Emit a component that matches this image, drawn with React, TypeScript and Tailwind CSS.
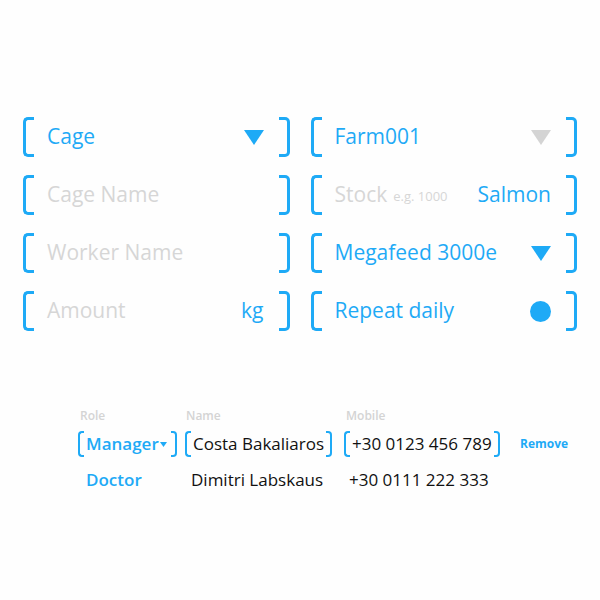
const BLUE = "text-[#1eaaf6]"

function Field({ children }: { children: React.ReactNode }) {
  return (
    <div className="flex h-[40px] items-stretch">
      <div className="w-[11px] rounded-l-[5px] border-[3px] border-r-0 border-[#1eaaf6]" />
      <div className="flex flex-1 items-center pl-[13px] pr-[15px] text-[21px] font-medium">{children}</div>
      <div className="w-[11px] rounded-r-[5px] border-[3px] border-l-0 border-[#1eaaf6]" />
    </div>
  )
}

function SmallField({ children, w }: { children: React.ReactNode; w: string }) {
  return (
    <div className={`flex h-[26px] items-stretch whitespace-nowrap ${w}`}>
      <div className="w-[6px] rounded-l-[4px] border-2 border-r-0 border-[#1eaaf6]" />
      <div className="flex flex-1 items-center px-[2px]">{children}</div>
      <div className="w-[6px] rounded-r-[4px] border-2 border-l-0 border-[#1eaaf6]" />
    </div>
  )
}

function Triangle({ color }: { color: string }) {
  return (
    <svg width="20" height="15" viewBox="0 0 20 15" className="ml-auto">
      <polygon points="0,0 20,0 10,15" fill={color} />
    </svg>
  )
}

export default function App() {
  return (
    <div className="min-h-[600px] w-[600px] bg-[#fefefe] font-['Open_Sans',sans-serif]">
      <div className="grid grid-cols-2 gap-x-[21px] gap-y-[18px] px-[23px] pt-[117px]">
        <Field>
          <span className={BLUE}>Cage</span>
          <Triangle color="#1eaaf6" />
        </Field>
        <Field>
          <span className={BLUE}>Farm001</span>
          <Triangle color="#d4d4d4" />
        </Field>
        <Field>
          <span className="text-[#d6d6d6]">Cage Name</span>
        </Field>
        <Field>
          <span className="text-[#d6d6d6]">Stock</span>
          <span className="ml-[6px] mt-[4px] text-[13px] text-[#d6d6d6]">e.g. 1000</span>
          <span className={`ml-auto ${BLUE}`}>Salmon</span>
        </Field>
        <Field>
          <span className="text-[#d6d6d6]">Worker Name</span>
        </Field>
        <Field>
          <span className={BLUE}>Megafeed 3000e</span>
          <Triangle color="#1eaaf6" />
        </Field>
        <Field>
          <span className="text-[#d6d6d6]">Amount</span>
          <span className={`ml-auto ${BLUE}`}>kg</span>
        </Field>
        <Field>
          <span className={BLUE}>Repeat daily</span>
          <span className="ml-auto h-[21px] w-[21px] rounded-full bg-[#1eaaf6]" />
        </Field>
      </div>

      <div className="ml-[78px] mt-[76px] grid grid-cols-[107px_159px_176px_auto] items-center whitespace-nowrap text-[17px] font-medium">
        <span className="mb-[6px] pl-[2px] text-[12px] font-semibold text-[#d4d4d4]">Role</span>
        <span className="mb-[6px] pl-[1px] text-[12px] font-semibold text-[#d4d4d4]">Name</span>
        <span className="mb-[6px] pl-[2px] text-[12px] font-semibold text-[#d4d4d4]">Mobile</span>
        <span />

        <SmallField w="w-[99px]">
          <span className={`font-semibold ${BLUE}`}>Manager</span>
          <svg width="7" height="5" viewBox="0 0 7 5" className="ml-auto mr-[2px]">
            <polygon points="0,0 7,0 3.5,5" fill="#1eaaf6" />
          </svg>
        </SmallField>
        <SmallField w="w-fit">
          <span className="text-[#111]">Costa Bakaliaros</span>
        </SmallField>
        <SmallField w="w-fit">
          <span className="text-[#111]">+30 0123 456 789</span>
        </SmallField>
        <span className={`text-[12px] font-bold ${BLUE}`}>Remove</span>

        <span className={`mt-[10px] pl-[8px] font-semibold ${BLUE}`}>Doctor</span>
        <span className="mt-[10px] pl-[6px] text-[#111]">Dimitri Labskaus</span>
        <span className="mt-[10px] pl-[5px] text-[#111]">+30 0111 222 333</span>
        <span />
      </div>
    </div>
  )
}
